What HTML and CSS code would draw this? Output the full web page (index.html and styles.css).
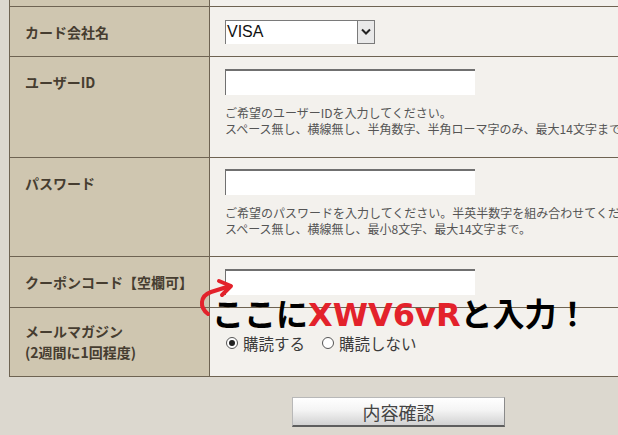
FILE: index.html
```html
<!doctype html>
<html lang="ja">
  <head>
    <meta charset="UTF-8" />
    <meta name="viewport" content="width=device-width, initial-scale=1.0" />
    <title>会員登録 - 入力</title>
    <link rel="stylesheet" href="styles.css">
  </head>
  <body>
    <div class="page">
      <div class="form-table">
        <div class="row row-cut">
          <div class="label"></div>
          <div class="field"></div>
        </div>

        <div class="row">
          <div class="label">カード会社名</div>
          <div class="field field-card">
            <div class="select">
              <span class="select-value">VISA</span>
              <span class="select-btn">
                <svg viewBox="0 0 10 8" width="10" height="8">
                  <path d="M1 1.5 L5 5.5 L9 1.5" fill="none" stroke="#222" stroke-width="2" />
                </svg>
              </span>
            </div>
          </div>
        </div>

        <div class="row">
          <div class="label">ユーザーID</div>
          <div class="field field-help">
            <div class="text-input"></div>
            <p class="help">
              ご希望のユーザーIDを入力してください。<br>
              スペース無し、横線無し、半角数字、半角ローマ字のみ、最大14文字まで。
            </p>
          </div>
        </div>

        <div class="row">
          <div class="label">パスワード</div>
          <div class="field field-help field-pass">
            <div class="text-input"></div>
            <p class="help">
              ご希望のパスワードを入力してください。半英半数字を組み合わせてください。<br>
              スペース無し、横線無し、最小8文字、最大14文字まで。
            </p>
          </div>
        </div>

        <div class="row">
          <div class="label">クーポンコード【空欄可】</div>
          <div class="field field-coupon">
            <div class="text-input"></div>
          </div>
        </div>

        <div class="row row-mail">
          <div class="label">メールマガジン<br>(2週間に1回程度)</div>
          <div class="field field-radio">
            <label class="radio"><span class="radio-dot checked"></span>購読する</label>
            <label class="radio"><span class="radio-dot"></span>購読しない</label>
          </div>
        </div>
      </div>

      <div class="actions">
        <button class="confirm-button" type="button">内容確認</button>
      </div>

      <!-- annotation drawn over the form -->
      <svg class="callout-arrow" viewBox="0 0 40 40" width="40" height="40">
        <path d="M12 37 C 3 30, 4 19, 15 15 L 34 9" fill="none" stroke="#e3222b" stroke-width="4" stroke-linecap="round" />
        <path d="M23 4 L 35 9 L 26 18" fill="none" stroke="#e3222b" stroke-width="4" stroke-linecap="round" stroke-linejoin="round" />
      </svg>
      <div class="callout">ここに<span class="code">XWV6vR</span>と入力！</div>
    </div>
  </body>
</html>
```

FILE: styles.css
```css
* {
  margin: 0;
  padding: 0;
  box-sizing: border-box;
}

html,
body {
  height: 100%;
  background: #dcd8cf;
  overflow: hidden;
  font-family: 'Noto Sans CJK JP', sans-serif;
  color: #444;
}

.page {
  position: relative;
  padding-left: 9px;
  width: 740px;
}

.form-table {
  width: 720px;
  border-left: 1px solid #6e6352;
}

.row {
  display: grid;
  grid-template-columns: 200px 1fr;
  border-bottom: 1px solid #6e6352;
}

.label {
  background: #cfc6b0;
  border-right: 1px solid #6e6352;
  padding: 15px 0 0 15px;
  font-size: 14px;
  line-height: 21px;
  font-weight: 700;
  color: #463d30;
}

.field {
  background: #f3f1ed;
  padding-left: 15px;
}

.row-cut .label,
.row-cut .field {
  height: 6px;
  padding: 0;
}

.field-card {
  padding-top: 13px;
  padding-bottom: 12px;
}

.select {
  display: flex;
  width: 150px;
  height: 24px;
  background: #fff;
  border-top: 1px solid #7a7a7a;
  border-left: 1px solid #7a7a7a;
}

.select-value {
  flex: 1;
  font-family: 'Liberation Sans', Arial, sans-serif;
  font-size: 16px;
  line-height: 22px;
  padding-left: 1px;
  color: #111;
}

.select-btn {
  width: 18px;
  display: flex;
  align-items: center;
  justify-content: center;
  background: #e9e9e9;
  border: 1px solid #7a7a7a;
  border-top: none;
}

.text-input {
  width: 250px;
  height: 26px;
  background: #fff;
  border-top: 2px solid #707070;
  border-left: 1px solid #707070;
}

.field-help {
  padding-top: 12px;
  padding-bottom: 20px;
}

.field-pass {
  padding-top: 11px;
  padding-bottom: 19px;
}

.help {
  margin-top: 10px;
  font-size: 12px;
  line-height: 16px;
  color: #555;
  white-space: nowrap;
}

.field-coupon {
  padding-top: 12px;
  padding-bottom: 12px;
}

.row-mail .label {
  height: 68px;
  padding-top: 13px;
}

.field-radio {
  display: flex;
  align-items: center;
  gap: 17px;
  padding-left: 16px;
  padding-top: 2px;
  font-size: 15.5px;
  color: #3a3a3a;
}

.radio {
  display: flex;
  align-items: center;
  gap: 5px;
}

.radio-dot {
  width: 12px;
  height: 12px;
  border-radius: 50%;
  border: 1px solid #555;
  background: #fff;
  display: flex;
  align-items: center;
  justify-content: center;
}

.radio-dot.checked::after {
  content: '';
  width: 6px;
  height: 6px;
  border-radius: 50%;
  background: #222;
}

.actions {
  padding: 20px 0 0 283px;
}

.confirm-button {
  width: 213px;
  height: 30px;
  font-family: 'Noto Sans CJK JP', sans-serif;
  font-size: 18px;
  color: #444;
  background: linear-gradient(#ffffff 0%, #f4f4f4 45%, #d2d2d2 100%);
  border: 1px solid #b8b8b8;
  border-bottom: 2px solid #5e5e5e;
  border-right: 1px solid #8a8a8a;
  cursor: pointer;
}

.callout-arrow {
  position: absolute;
  left: 196px;
  top: 277px;
}

.callout {
  position: absolute;
  left: 212px;
  top: 296px;
  font-family: 'DejaVu Sans', 'Noto Sans CJK JP', sans-serif;
  font-size: 32px;
  line-height: 38px;
  font-weight: 700;
  color: #000;
  white-space: nowrap;
}

.callout .code {
  color: #e3222b;
}
```
